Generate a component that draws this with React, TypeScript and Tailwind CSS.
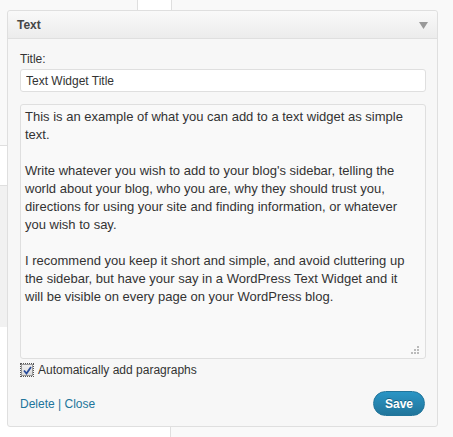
export default function App() {
  const body = `This is an example of what you can add to a text widget as simple text.

Write whatever you wish to add to your blog's sidebar, telling the world about your blog, who you are, why they should trust you, directions for using your site and finding information, or whatever you wish to say.

I recommend you keep it short and simple, and avoid cluttering up the sidebar, but have your say in a WordPress Text Widget and it will be visible on every page on your WordPress blog.`;

  return (
    <div
      className="relative h-[437px] w-[453px] overflow-hidden bg-[#f9f9f9] text-[12px] text-[#333]"
      style={{ fontFamily: '"Liberation Sans", Arial, sans-serif' }}
    >
      {/* background page bits behind the widget */}
      <div className="absolute left-[137px] top-0 h-[10px] w-[35px] border-x border-[#dfdfdf] bg-white" />
      <div className="absolute left-0 top-[145px] h-[41px] w-[10px] border-y border-[#dfdfdf] bg-white" />
      <div className="absolute left-0 top-[186px] h-[141px] w-[10px] bg-[#f1f1f1]" />
      <div className="absolute left-0 top-[327px] h-[110px] w-[10px] bg-white" />
      <div className="absolute left-0 top-[427px] h-[10px] w-[171px] border-r border-[#dfdfdf] bg-white" />

      <div className="relative ml-[7px] mt-[10px] w-[431px] rounded-[3px] border border-[#dfdfdf] bg-[#f7f7f7]">
        <div className="flex h-[28px] items-center justify-between rounded-t-[3px] border-b border-[#dfdfdf] bg-gradient-to-b from-[#f9f9f9] to-[#ececec] pl-[9px] pr-[9px]">
          <span className="font-bold text-[#464646]">Text</span>
          <svg width="9" height="7" viewBox="0 0 9 7" className="mt-[1px]">
            <path d="M0 0 H9 L4.5 7 Z" fill="#999" />
          </svg>
        </div>

        <div className="px-[12px] pb-[10px] pt-[12px]">
          <label className="block leading-[16px]">Title:</label>
          <input
            readOnly
            value="Text Widget Title"
            className="mt-[2px] block h-[23px] w-[406px] rounded-[3px] border border-[#dfdfdf] bg-white px-[5px] text-[12px] text-[#333] outline-none"
          />

          <div className="relative mt-[12px]">
            <textarea
              readOnly
              value={body}
              className="block h-[255px] w-[406px] resize-none rounded-[3px] border border-[#dfdfdf] bg-[#f9f9f9] pl-[4px] pr-[16px] pt-[3px] text-[13px] leading-[18px] text-[#333] outline-none"
            />
            <svg width="9" height="9" viewBox="0 0 9 9" className="absolute bottom-[4px] right-[5px]">
              <rect x="6" y="0" width="2" height="2" fill="#bbb" />
              <rect x="3" y="3" width="2" height="2" fill="#bbb" />
              <rect x="6" y="3" width="2" height="2" fill="#bbb" />
              <rect x="0" y="6" width="2" height="2" fill="#bbb" />
              <rect x="3" y="6" width="2" height="2" fill="#bbb" />
              <rect x="6" y="6" width="2" height="2" fill="#bbb" />
            </svg>
          </div>

          <div className="mt-[3px] flex items-center gap-[4px]">
            <span className="flex h-[14px] w-[14px] items-center justify-center border border-dotted border-[#555]">
              <span className="flex h-[12px] w-[12px] items-center justify-center border border-[#999] bg-gradient-to-b from-[#f0f0f0] to-[#dcdcdc]">
                <svg width="9" height="9" viewBox="0 0 9 9">
                  <path d="M1 4.5 L3.5 7.5 L8 1" stroke="#2a4d9b" strokeWidth="1.8" fill="none" />
                </svg>
              </span>
            </span>
            <span className="leading-[16px]">Automatically add paragraphs</span>
          </div>

          <div className="mt-[13px] flex items-center justify-between">
            <div className="text-[#21759b]">
              <span>Delete</span> <span>|</span> <span>Close</span>
            </div>
            <button className="h-[25px] w-[52px] rounded-full border border-[#21759b] bg-gradient-to-b from-[#2a95c5] to-[#21759b] text-[12px] font-bold text-white [text-shadow:0_-1px_0_rgba(0,0,0,0.3)]">
              Save
            </button>
          </div>
        </div>
      </div>
    </div>
  );
}
